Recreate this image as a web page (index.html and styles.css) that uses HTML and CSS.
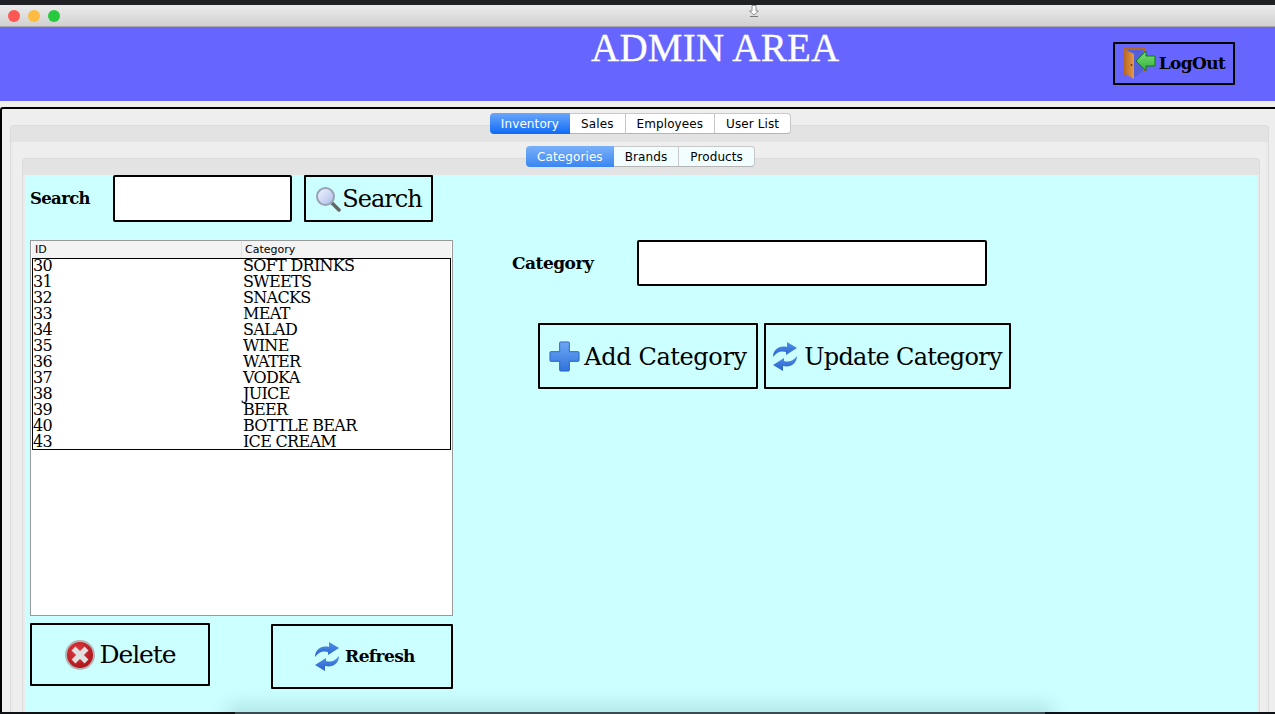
FILE: index.html
```html
<!DOCTYPE html>
<html lang="en">
<head>
  <meta charset="UTF-8">
  <title>Admin Area</title>
  <link rel="stylesheet" href="styles.css">
</head>
<body>
  <svg class="defs" width="0" height="0">
    <defs>
      <linearGradient id="blueGrad" x1="0" y1="0" x2="0" y2="1">
        <stop offset="0" stop-color="#4f90ea"/>
        <stop offset="1" stop-color="#2a62cc"/>
      </linearGradient>
      <linearGradient id="plusGrad" x1="0" y1="0" x2="0" y2="1">
        <stop offset="0" stop-color="#6ea8f4"/>
        <stop offset="1" stop-color="#2f72dc"/>
      </linearGradient>
      <linearGradient id="lensGrad" x1="0" y1="0" x2="1" y2="1">
        <stop offset="0" stop-color="#f4f7ff"/>
        <stop offset="1" stop-color="#a9bce8"/>
      </linearGradient>
      <radialGradient id="redGrad" cx="0.4" cy="0.35" r="0.75">
        <stop offset="0" stop-color="#e23a40"/>
        <stop offset="1" stop-color="#a30f16"/>
      </radialGradient>
      <linearGradient id="doorGrad" x1="0" y1="0" x2="1" y2="0">
        <stop offset="0" stop-color="#b9661f"/>
        <stop offset="1" stop-color="#e59a4c"/>
      </linearGradient>
      <linearGradient id="arrowGrad" x1="0" y1="0" x2="0" y2="1">
        <stop offset="0" stop-color="#7be07b"/>
        <stop offset="1" stop-color="#35b035"/>
      </linearGradient>
      <symbol id="refresh" viewBox="0 0 24 31">
        <path fill="url(#blueGrad)" d="M0 16C0 9 6 4 14 6V1L24 7 13 14V11C8 9.500 4 11 0 16Z"/>
        <path fill="url(#blueGrad)" d="M24 15C24 22 18 27 10 25V30L0 24 11 17V20C16 21.500 20 20 24 15Z"/>
      </symbol>
    </defs>
  </svg>

  <div class="window">
    <div class="top-strip"></div>
    <div class="titlebar">
      <span class="light red"></span>
      <span class="light yellow"></span>
      <span class="light green"></span>
      <svg class="proxy-arrow" width="10" height="12" viewBox="0 0 10 12">
        <path fill="#fff" stroke="#777" stroke-width="0.8" d="M3 0.500H7V6H9.500L5 10 0.500 6H3Z"/>
        <path stroke="#777" d="M1 11.500H9"/>
      </svg>
    </div>

    <header class="header">
      <h1 class="title">ADMIN AREA</h1>
      <button class="btn logout">
        <svg width="34" height="33" viewBox="0 0 34 33">
          <path fill="#b9661f" d="M1 1H22V25H20V3H3V28H1Z"/>
          <path fill="#5560d8" d="M3 3H20V24L10 32V8Z"/>
          <path fill="url(#doorGrad)" d="M1 2L11 7V32L1 26Z"/>
          <circle cx="8.500" cy="18" r="1" fill="#6b3a10"/>
          <path fill="url(#arrowGrad)" stroke="#0f7a0f" d="M13 14L23 4V9H32V19H23V24Z"/>
        </svg>
        <span>LogOut</span>
      </button>
    </header>

    <main class="main">
      <div class="tabs">
        <span class="tab active">Inventory</span>
        <span class="tab">Sales</span>
        <span class="tab">Employees</span>
        <span class="tab">User List</span>
      </div>
      <div class="pane">
        <div class="pane-body">
          <div class="tabs sub">
            <span class="tab active">Categories</span>
            <span class="tab">Brands</span>
            <span class="tab">Products</span>
          </div>
          <div class="pane inner">
            <div class="form-area">
              <section class="left-col">
                <div class="search-row">
                  <label class="label search-label">Search</label>
                  <input class="field search-field" type="text">
                  <button class="btn search-btn">
                    <svg width="26" height="26" viewBox="0 0 26 26">
                      <path d="M15 15L24 24" stroke="#666" stroke-width="3.500" stroke-linecap="round"/>
                      <circle cx="10.500" cy="10.500" r="8.500" fill="url(#lensGrad)" stroke="#9aa3b5" stroke-width="2"/>
                    </svg>
                    <span>Search</span>
                  </button>
                </div>

                <div class="table-box">
                  <div class="table-head">
                    <span class="col-id">ID</span>
                    <span class="col-name">Category</span>
                  </div>
                  <div class="table-rows">
                    <div class="row"><span class="col-id">30</span><span class="col-name">SOFT DRINKS</span></div>
                    <div class="row"><span class="col-id">31</span><span class="col-name">SWEETS</span></div>
                    <div class="row"><span class="col-id">32</span><span class="col-name">SNACKS</span></div>
                    <div class="row"><span class="col-id">33</span><span class="col-name">MEAT</span></div>
                    <div class="row"><span class="col-id">34</span><span class="col-name">SALAD</span></div>
                    <div class="row"><span class="col-id">35</span><span class="col-name">WINE</span></div>
                    <div class="row"><span class="col-id">36</span><span class="col-name">WATER</span></div>
                    <div class="row"><span class="col-id">37</span><span class="col-name">VODKA</span></div>
                    <div class="row"><span class="col-id">38</span><span class="col-name">JUICE</span></div>
                    <div class="row"><span class="col-id">39</span><span class="col-name">BEER</span></div>
                    <div class="row"><span class="col-id">40</span><span class="col-name">BOTTLE BEAR</span></div>
                    <div class="row"><span class="col-id">43</span><span class="col-name">ICE CREAM</span></div>
                  </div>
                </div>

                <div class="table-actions">
                  <button class="btn delete-btn">
                    <svg width="30" height="30" viewBox="0 0 30 30">
                      <circle cx="15" cy="15" r="14" fill="url(#redGrad)" stroke="#b5b5b5" stroke-width="2"/>
                      <path d="M8.500 8.500L21.500 21.500M21.500 8.500L8.500 21.500" stroke="#e0e0e0" stroke-width="5.500"/>
                    </svg>
                    <span>Delete</span>
                  </button>
                  <button class="btn refresh-btn">
                    <svg width="24" height="31"><use href="#refresh"/></svg>
                    <span>Refresh</span>
                  </button>
                </div>
              </section>

              <section class="right-col">
                <div class="category-row">
                  <label class="label category-label">Category</label>
                  <input class="field category-field" type="text">
                </div>
                <div class="category-actions">
                  <button class="btn add-btn">
                    <svg width="31" height="31" viewBox="0 0 32 32">
                      <path fill="url(#plusGrad)" stroke="#2a62c0" d="M11 2Q11 1 12 1H20Q21 1 21 2V11H30Q31 11 31 12V20Q31 21 30 21H21V30Q21 31 20 31H12Q11 31 11 30V21H2Q1 21 1 20V12Q1 11 2 11H11Z"/>
                    </svg>
                    <span>Add Category</span>
                  </button>
                  <button class="btn update-btn">
                    <svg width="24" height="31"><use href="#refresh"/></svg>
                    <span>Update Category</span>
                  </button>
                </div>
              </section>
            </div>
          </div>
        </div>
      </div>
    </main>

    <!-- shadow of the dock over the bottom of the window -->
    <div class="dock-shadow"></div>
    <div class="bottom-line"></div>
  </div>
</body>
</html>
```

FILE: styles.css
```css
html, body {
  margin: 0;
  padding: 0;
  background: #16181c;
}

.defs {
  position: absolute;
}

.window {
  position: relative;
  display: flex;
  flex-direction: column;
  width: 1275px;
  height: 714px;
  overflow: hidden;
  font-family: "DejaVu Serif", serif;
  color: #000;
  background: #eeeeee;
}

.top-strip {
  height: 5px;
  flex: none;
  background: #202124;
}

.titlebar {
  position: relative;
  display: flex;
  align-items: center;
  gap: 8px;
  height: 22px;
  flex: none;
  box-sizing: border-box;
  padding-left: 8px;
  border-bottom: 1px solid #a9a9a9;
  border-radius: 4px 4px 0 0;
  background: linear-gradient(#ececec, #d0d0d0);
}

.light {
  width: 12px;
  height: 12px;
  border-radius: 50%;
}

.red { background: #fc5753; }
.yellow { background: #fdbc40; }
.green { background: #27c93f; }

.proxy-arrow {
  position: absolute;
  left: 749px;
  top: 0;
}

.header {
  position: relative;
  height: 74px;
  flex: none;
  background: #6666ff;
}

.title {
  margin: 0;
  padding-left: 591px;
  font: 400 39px/42px "Liberation Serif", serif;
  letter-spacing: 0.25px;
  color: #fff;
  -webkit-text-stroke: 0.3px #fff;
}

.btn {
  display: flex;
  align-items: center;
  justify-content: center;
  box-sizing: border-box;
  padding: 0;
  border: 2px solid #000;
  border-radius: 1px;
  background: transparent;
  color: #000;
  font-family: "DejaVu Serif", serif;
}

.logout {
  position: absolute;
  left: 1113px;
  top: 15px;
  gap: 2px;
  width: 122px;
  height: 43px;
  font-size: 17px;
  font-weight: 700;
  letter-spacing: -0.6px;
}

.logout span {
  margin-bottom: 2px;
}

.main {
  flex: 1;
  display: flex;
  flex-direction: column;
  min-height: 0;
  margin-top: 6px;
  padding: 4px 6px 0 8px;
  border-top: 2px solid #000;
  border-left: 2px solid #000;
  border-top-left-radius: 3px;
}

.tabs {
  position: relative;
  z-index: 1;
  display: flex;
  align-self: center;
  height: 21px;
  flex: none;
  margin-bottom: -9px;
  margin-left: 2px;
  font: 12px/20px "DejaVu Sans", sans-serif;
  letter-spacing: 0.1px;
}

.tab {
  box-sizing: border-box;
  height: 21px;
  padding: 0 11px;
  border: 1px solid #c8c8c8;
  border-left: 0;
  border-bottom-color: #b4b4b4;
  background: #fff;
}

.tab:last-child {
  border-radius: 0 4px 4px 0;
}

.tab.active {
  border: 0;
  border-radius: 4px 0 0 4px;
  line-height: 22px;
  color: #fff;
  background: linear-gradient(#6aa6fb, #0e6bf6);
}

.tabs.sub {
  margin-left: -1px;
}

.tabs.sub .tab {
  background: #f2fdff;
}

.tabs.sub .tab.active {
  background: linear-gradient(#7ab0f8, #3b86f3);
}

.pane {
  flex: 1;
  display: flex;
  flex-direction: column;
  min-height: 0;
  box-sizing: border-box;
  padding: 16px 3px 0;
  border: 1px solid #dcdcdc;
  border-bottom: 0;
  border-radius: 4px 4px 0 0;
  background: linear-gradient(#e3e3e3 16px, #ebebeb 16px);
}

.pane-body {
  flex: 1;
  display: flex;
  flex-direction: column;
  min-height: 0;
  padding: 4px 5px 0 8px;
  background: #eeeeee;
}

.form-area {
  flex: 1;
  display: flex;
  min-height: 0;
  box-sizing: border-box;
  padding-left: 5px;
  background: #ccffff;
}

.pane.inner {
  padding: 16px 2px 0;
}

.left-col {
  display: flex;
  flex-direction: column;
  width: 423px;
  flex: none;
}

.search-row {
  display: flex;
  align-items: center;
  height: 47px;
}

.label {
  font-size: 16.500px;
  font-weight: 700;
  letter-spacing: -0.65px;
}

.search-label {
  width: 83px;
}

.field {
  box-sizing: border-box;
  border: 2px solid #000;
  border-radius: 2px;
  background: #fff;
}

.search-field {
  width: 179px;
  height: 47px;
}

.search-btn {
  gap: 1px;
  width: 129px;
  height: 47px;
  margin-left: 12px;
  font-size: 24px;
  letter-spacing: -1px;
}

.table-box {
  display: flex;
  flex-direction: column;
  box-sizing: border-box;
  height: 376px;
  margin-top: 18px;
  padding: 0 1px;
  border: 1px solid #999;
  background: #fff;
}

.table-head {
  display: flex;
  height: 17px;
  flex: none;
  font: 11px/17px "DejaVu Sans", sans-serif;
  background: #f3f3f3;
}

.table-head .col-id {
  width: 206px;
  padding-left: 3px;
}

.table-head .col-name {
  padding-left: 3px;
  border-left: 1px solid #e0e0e0;
}

.table-rows {
  box-sizing: border-box;
  height: 192px;
  border: 1px solid #000;
}

.row {
  display: flex;
  height: 16px;
  font-size: 16px;
  line-height: 14px;
  letter-spacing: -0.7px;
}

.row .col-id {
  width: 210px;
}

.table-actions {
  display: flex;
  align-items: flex-start;
  justify-content: space-between;
  margin-top: 7px;
}

.delete-btn {
  gap: 5px;
  width: 180px;
  height: 63px;
  font-size: 25px;
  letter-spacing: -1.1px;
}

.refresh-btn {
  gap: 6px;
  width: 182px;
  height: 65px;
  margin-top: 1px;
  padding-left: 6px;
  font-size: 17px;
  font-weight: 700;
  letter-spacing: -0.6px;
}

.refresh-btn span {
  margin-bottom: 2px;
}

.right-col {
  display: flex;
  flex-direction: column;
  margin-left: 59px;
  padding-top: 65px;
}

.category-row {
  display: flex;
  align-items: center;
}

.category-label {
  width: 125px;
  font-size: 17px;
  letter-spacing: -0.5px;
}

.category-field {
  width: 350px;
  height: 46px;
}

.category-actions {
  display: flex;
  gap: 6px;
  margin-top: 37px;
  margin-left: 26px;
}

.add-btn {
  gap: 4px;
  width: 220px;
  height: 66px;
  font-size: 24px;
  letter-spacing: -0.4px;
}

.update-btn {
  gap: 7px;
  width: 247px;
  height: 66px;
  font-size: 24px;
  letter-spacing: -0.7px;
}

.add-btn span,
.update-btn span {
  margin-top: 2px;
}

.dock-shadow {
  position: absolute;
  left: 235px;
  bottom: -6px;
  width: 810px;
  height: 8px;
  box-shadow: 0 0 18px 8px rgba(0, 60, 60, 0.13);
}

.bottom-line {
  position: absolute;
  left: 0;
  right: 0;
  bottom: 0;
  height: 2px;
  background: linear-gradient(90deg, #101216 235px, #3d4a52 235px, #3d4a52 1045px, #0e1218 1045px);
}
```
